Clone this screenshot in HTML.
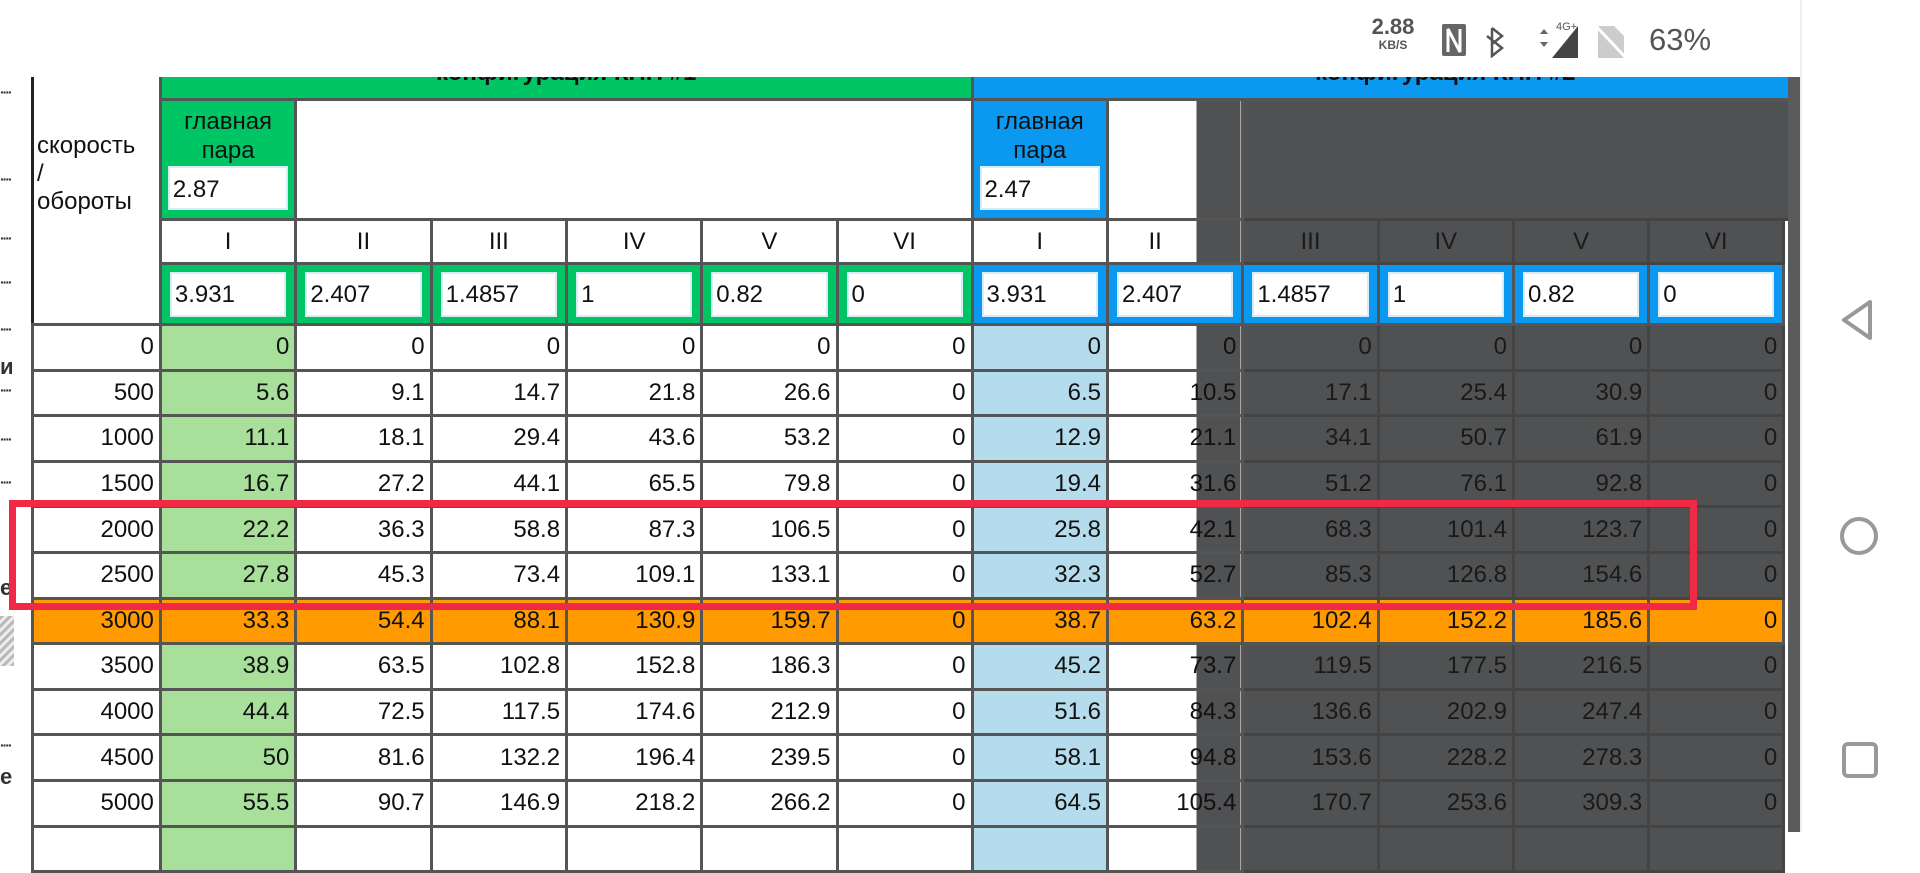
<!DOCTYPE html>
<html><head><meta charset="utf-8"><style>
*{margin:0;padding:0;box-sizing:border-box}
body{width:1920px;height:832px;overflow:hidden;background:#fff;font-family:"Liberation Sans","DejaVu Sans",sans-serif;position:relative}
table{position:absolute;left:31px;top:50px;border-collapse:collapse;table-layout:fixed;font-size:24px;color:#111}
td{border:3px solid #555;height:45.6px;text-align:right;padding:0 5px;white-space:nowrap;overflow:hidden;background:#fff}
td.g{background:#a8df9b}
td.b{background:#b5dcec}
td.d{background:#505153;color:#1a1a1a;border-color:#444}
td.h{background:linear-gradient(90deg,#fff 0 88px,#505153 88px)}
tr.o td{background:#ff9a00}
.hd td{height:48px;text-align:center;font-weight:bold;font-size:24px;vertical-align:bottom;line-height:24px;padding-bottom:13px}
.rm td{height:44px;text-align:center}
.in td{height:61px;padding:6px 8px}
.in td div{background:#fff;border:2px solid #d8ecf8;height:45px;text-align:left;padding-left:3px;line-height:42px}
.gi{background:#00c564!important}
.bi{background:#0a98f0!important}
.mp td{height:120px}
.gp{text-align:center;vertical-align:top;padding:6px 6px!important;line-height:29px}
.gp div{background:#fff;height:44px;text-align:left;padding-left:3px;line-height:44px;margin-top:1px;border:2px solid #d8ecf8}
.lm{position:absolute;left:0;font-size:14px;color:#333;font-weight:bold;letter-spacing:-2px}
</style></head><body>
<table>
<colgroup><col style="width:128px"><col span="13" style="width:135.7px"></colgroup>
<tr class="hd"><td style="border:none;border-left:3px solid #222;background:#fff"></td><td colspan="6" class="gi" style="color:#111">конфигурация КПП #1</td><td colspan="7" class="bi" style="color:#111">конфигурация КПП #2</td></tr>
<tr class="mp"><td rowspan="3" style="text-align:left;vertical-align:top;padding:32px 4px 0 3px;line-height:28px;border-left:3px solid #222;border-top:none;border-right-color:#555">скорость<br>/<br>обороты</td>
<td class="gp gi">главная<br>пара<div>2.87</div></td><td colspan="5" style="background:#fff"></td>
<td class="gp bi">главная<br>пара<div>2.47</div></td><td class="h"></td><td colspan="5" class="d"></td></tr>
<tr class="rm"><td>I</td><td>II</td><td>III</td><td>IV</td><td>V</td><td>VI</td><td>I</td><td class="h" style="text-align:center;padding-right:45px">II</td><td class="d">III</td><td class="d">IV</td><td class="d">V</td><td class="d">VI</td></tr>
<tr class="in"><td class="gi"><div>3.931</div></td><td class="gi"><div>2.407</div></td><td class="gi"><div>1.4857</div></td><td class="gi"><div>1</div></td><td class="gi"><div>0.82</div></td><td class="gi"><div>0</div></td><td class="bi"><div>3.931</div></td><td class="bi"><div>2.407</div></td><td class="bi"><div>1.4857</div></td><td class="bi"><div>1</div></td><td class="bi"><div>0.82</div></td><td class="bi"><div>0</div></td></tr>
<tr><td>0</td><td class="g">0</td><td>0</td><td>0</td><td>0</td><td>0</td><td>0</td><td class="b">0</td><td class="h">0</td><td class="d">0</td><td class="d">0</td><td class="d">0</td><td class="d">0</td></tr>
<tr><td>500</td><td class="g">5.6</td><td>9.1</td><td>14.7</td><td>21.8</td><td>26.6</td><td>0</td><td class="b">6.5</td><td class="h">10.5</td><td class="d">17.1</td><td class="d">25.4</td><td class="d">30.9</td><td class="d">0</td></tr>
<tr><td>1000</td><td class="g">11.1</td><td>18.1</td><td>29.4</td><td>43.6</td><td>53.2</td><td>0</td><td class="b">12.9</td><td class="h">21.1</td><td class="d">34.1</td><td class="d">50.7</td><td class="d">61.9</td><td class="d">0</td></tr>
<tr><td>1500</td><td class="g">16.7</td><td>27.2</td><td>44.1</td><td>65.5</td><td>79.8</td><td>0</td><td class="b">19.4</td><td class="h">31.6</td><td class="d">51.2</td><td class="d">76.1</td><td class="d">92.8</td><td class="d">0</td></tr>
<tr><td>2000</td><td class="g">22.2</td><td>36.3</td><td>58.8</td><td>87.3</td><td>106.5</td><td>0</td><td class="b">25.8</td><td class="h">42.1</td><td class="d">68.3</td><td class="d">101.4</td><td class="d">123.7</td><td class="d">0</td></tr>
<tr><td>2500</td><td class="g">27.8</td><td>45.3</td><td>73.4</td><td>109.1</td><td>133.1</td><td>0</td><td class="b">32.3</td><td class="h">52.7</td><td class="d">85.3</td><td class="d">126.8</td><td class="d">154.6</td><td class="d">0</td></tr>
<tr class="o"><td>3000</td><td>33.3</td><td>54.4</td><td>88.1</td><td>130.9</td><td>159.7</td><td>0</td><td>38.7</td><td>63.2</td><td>102.4</td><td>152.2</td><td>185.6</td><td>0</td></tr>
<tr><td>3500</td><td class="g">38.9</td><td>63.5</td><td>102.8</td><td>152.8</td><td>186.3</td><td>0</td><td class="b">45.2</td><td class="h">73.7</td><td class="d">119.5</td><td class="d">177.5</td><td class="d">216.5</td><td class="d">0</td></tr>
<tr><td>4000</td><td class="g">44.4</td><td>72.5</td><td>117.5</td><td>174.6</td><td>212.9</td><td>0</td><td class="b">51.6</td><td class="h">84.3</td><td class="d">136.6</td><td class="d">202.9</td><td class="d">247.4</td><td class="d">0</td></tr>
<tr><td>4500</td><td class="g">50</td><td>81.6</td><td>132.2</td><td>196.4</td><td>239.5</td><td>0</td><td class="b">58.1</td><td class="h">94.8</td><td class="d">153.6</td><td class="d">228.2</td><td class="d">278.3</td><td class="d">0</td></tr>
<tr><td>5000</td><td class="g">55.5</td><td>90.7</td><td>146.9</td><td>218.2</td><td>266.2</td><td>0</td><td class="b">64.5</td><td class="h">105.4</td><td class="d">170.7</td><td class="d">253.6</td><td class="d">309.3</td><td class="d">0</td></tr>
<tr><td></td><td class="g"></td><td></td><td></td><td></td><td></td><td></td><td class="b"></td><td class="h"></td><td class="d"></td><td class="d"></td><td class="d"></td><td class="d"></td></tr>
</table>
<div style="position:absolute;left:1788px;top:76px;width:12px;height:756px;background:#5a5b5d"></div>
<div style="position:absolute;left:1800px;top:0;width:120px;height:832px;background:#fff;border-left:2px solid #eee"></div>
<svg style="position:absolute;left:1838px;top:298px" width="40" height="44"><path d="M32 4 L6 22 L32 40 Z" fill="none" stroke="#999" stroke-width="4" stroke-linejoin="round"/></svg>
<svg style="position:absolute;left:1838px;top:515px" width="42" height="42"><circle cx="21" cy="21" r="17" fill="none" stroke="#999" stroke-width="4"/></svg>
<svg style="position:absolute;left:1840px;top:740px" width="40" height="40"><rect x="4" y="4" width="32" height="32" rx="4" fill="none" stroke="#999" stroke-width="4"/></svg>
<div style="position:absolute;left:0;top:0;width:1800px;height:77px;background:#fff"></div>
<div style="position:absolute;left:1368px;top:16px;font-size:22px;font-weight:bold;color:#555;line-height:22px;text-align:center;width:50px">2.88<div style="font-size:12px;line-height:14px">KB/S</div></div>
<svg style="position:absolute;left:1440px;top:22px" width="90" height="36">
<rect x="2" y="2" width="24" height="32" rx="2" fill="#666"/><path d="M8 30 V7 L20 30 V7" stroke="#fff" stroke-width="3" fill="none"/>
<path d="M52 6 L62 14 L52 22 M52 6 V34 L62 26 L47 14" stroke="#555" stroke-width="2.5" fill="none"/>
</svg>
<svg style="position:absolute;left:1530px;top:16px" width="120" height="44">
<path d="M10 18 l4-5 l4 5z M10 26 l4 5 l4-5z" fill="#666"/>
<path d="M48 10 V42 H22 Z" fill="#444"/><text x="26" y="14" font-size="11" fill="#555" font-family="Liberation Sans">4G+</text>
<path d="M68 10 H84 L94 20 V42 H68 Z" fill="#ccc"/><path d="M64 8 L98 44" stroke="#fff" stroke-width="3"/>
</svg>
<div style="position:absolute;left:1649px;top:22px;font-size:31px;color:#555">63%</div>
<div class="lm" style="top:84px">····</div><div class="lm" style="top:171px">····</div><div class="lm" style="top:230px">····</div><div class="lm" style="top:274px">····</div><div class="lm" style="top:321px">····</div><div class="lm" style="top:382px">····</div><div class="lm" style="top:431px">····</div><div class="lm" style="top:474px">····</div><div class="lm" style="top:737px">····</div>
<div class="lm" style="top:354px;font-size:22px">и</div><div class="lm" style="top:575px;font-size:22px">e</div><div class="lm" style="top:764px;font-size:22px">e</div>
<div style="position:absolute;left:0;top:616px;width:14px;height:50px;background:repeating-linear-gradient(135deg,#bbb 0 3px,#eee 3px 6px)"></div>
<div style="position:absolute;left:9px;top:500px;width:1688px;height:110px;border:7px solid #f02a45"></div>
</body></html>
